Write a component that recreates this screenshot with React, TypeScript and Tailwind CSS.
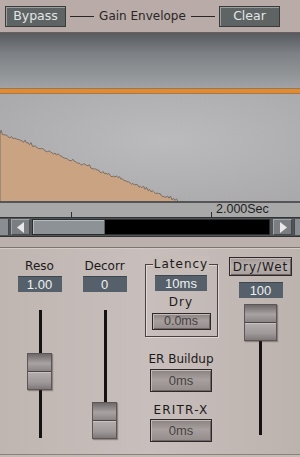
import React from "react";

const font = "font-['DejaVu_Sans',sans-serif]";
const helv = "font-['Liberation_Sans',Arial,sans-serif]";

function wavePoints(): string {
  const pts: string[] = ["0,170", "0,101"];
  for (let x = 1; x <= 178; x += 1.5) {
    const n =
      Math.sin(x * 1.7) * 1.2 +
      Math.sin(x * 0.63 + 1) * 1.3 +
      (Math.sin(x * 12.9898) * 43758.5453 % 1) * 1.8;
    let y = 101 + 0.385 * x - Math.abs(n);
    if (y > 169.5) y = 169.5;
    pts.push(`${x.toFixed(1)},${y.toFixed(1)}`);
  }
  pts.push("192,169.5", "192,170");
  return pts.join(" ");
}

function Graph() {
  return (
    <div className="h-[170px] w-full border-b-2 border-[#555457]">
      <svg width="300" height="168" viewBox="0 0 300 168" className="block">
        <defs>
          <linearGradient id="top" x1="0" y1="0" x2="0" y2="1">
            <stop offset="0" stopColor="#575b5f" />
            <stop offset="0.35" stopColor="#7c8084" />
            <stop offset="1" stopColor="#a2a4a6" />
          </linearGradient>
          <radialGradient id="bot" cx="0.55" cy="0.45" r="0.7">
            <stop offset="0" stopColor="#bbbbbd" />
            <stop offset="1" stopColor="#a9a9ab" />
          </radialGradient>
        </defs>
        <rect x="0" y="0" width="300" height="57" fill="url(#top)" />
        <rect x="0" y="57" width="300" height="111" fill="url(#bot)" />
        <rect x="0" y="55" width="300" height="1" fill="#8a7a6a" />
        <rect x="0" y="56" width="300" height="4" fill="#e48a2a" />
        <rect x="0" y="60" width="300" height="1" fill="#9a7a5a" />
        <polyline points={wavePoints()} fill="#caa482" stroke="#7a6e66" strokeWidth="1" />
      </svg>
    </div>
  );
}

function Ruler() {
  return (
    <div className="relative h-[14px] bg-[#a8a8a9]">
      <div className="absolute left-[71px] top-[9px] h-[5px] w-px bg-[#303030]" />
      <div className="absolute left-[211px] top-[9px] h-[5px] w-px bg-[#303030]" />
      <span className={`absolute left-[216px] top-[-1px] text-[12.5px] leading-[14px] text-[#1e1e1e] ${helv}`}>
        2.000Sec
      </span>
    </div>
  );
}

function ArrowBtn({ dir }: { dir: "l" | "r" }) {
  return (
    <div className="flex h-[16px] w-[19px] items-center justify-center border border-t-[#a0a4a6] border-l-[#a0a4a6] border-b-[#45494b] border-r-[#45494b] bg-[#7a7e82]">
      <svg width="8" height="11" viewBox="0 0 8 11">
        {dir === "l" ? (
          <polygon points="7,0 7,11 0,5.5" fill="#e8e8e8" />
        ) : (
          <polygon points="1,0 1,11 8,5.5" fill="#e8e8e8" />
        )}
      </svg>
    </div>
  );
}

function Scrollbar() {
  return (
    <div className="flex h-[20px] items-center bg-[#505456] border-y border-[#303234]">
      <div className="h-[16px] w-[9px] bg-[#8a8e92] border-r border-[#45494b]" />
      <div className="ml-[2px]">
        <ArrowBtn dir="l" />
      </div>
      <div className="ml-[2px] flex h-[16px] flex-1 border border-[#2a2c2e] bg-black">
        <div className="h-full w-[72px] bg-[#8c9296] border-r border-[#5a5e62] shadow-[inset_1px_1px_0_#b6bcc0]" />
      </div>
      <div className="ml-[3px]">
        <ArrowBtn dir="r" />
      </div>
      <div className="ml-[2px] h-[16px] w-[6px] bg-[#8a8e92] border-l border-[#45494b]" />
    </div>
  );
}

function ValueBox({ w, children }: { w: string; children: React.ReactNode }) {
  return (
    <div
      className={`flex h-[16px] ${w} items-center justify-center bg-[#56606a] text-[13px] text-[#eef0f0] ${helv} border-t border-[#3e464e]`}
    >
      {children}
    </div>
  );
}

function BevelBtn({ w, h, children, cls = "" }: { w: string; h: string; children: React.ReactNode; cls?: string }) {
  return (
    <div
      className={`flex ${w} ${h} items-center justify-center border border-[#2e2828] bg-[linear-gradient(#8a8282,#a8a09e_45%,#948c8a)] shadow-[inset_1px_1px_0_#c2bab8,inset_-1px_-1px_0_#6e6666] ${cls}`}
    >
      {children}
    </div>
  );
}

function Thumb({ w, h }: { w: string; h: string }) {
  return (
    <div
      className={`flex ${w} ${h} flex-col border border-[#5c5656] shadow-[1px_1px_1px_rgba(60,50,50,0.4)]`}
    >
      <div className="flex-1 bg-[linear-gradient(#6e6868,#a8a2a2_55%,#8a8484)]" />
      <div className="h-px bg-[#4a4444]" />
      <div className="h-px bg-[#c8c2c2]" />
      <div className="flex-1 bg-[linear-gradient(#b2acac,#9e9898_60%,#7e7878)]" />
    </div>
  );
}

function SliderCol({
  label,
  value,
  boxW,
  thumbTop,
}: {
  label: string;
  value: string;
  boxW: string;
  thumbTop: string;
}) {
  return (
    <div className="flex flex-col items-center">
      <div className={`h-[16px] text-[12px] leading-[16px] text-[#1c1a1a] ${font}`}>{label}</div>
      <div className="mt-[2px]">
        <ValueBox w={boxW}>{value}</ValueBox>
      </div>
      <div className="relative mt-[18px] h-[128px] w-[26px]">
        <div className="absolute left-[12px] top-0 bottom-0 w-[3px] bg-[#141212]" />
        <div className={`absolute left-0 ${thumbTop}`}>
          <Thumb w="w-[25px]" h="h-[37px]" />
        </div>
      </div>
    </div>
  );
}

export default function App() {
  return (
    <div className={`h-[457px] w-[300px] overflow-hidden bg-[#c4bab6] ${font}`}>
      {/* top bar */}
      <div className="flex h-[33px] items-center border-b border-[#6a6060] bg-[#b9aba7] px-[5px]">
        <div className="flex h-[21px] w-[61px] items-center justify-center border border-[#3a3a3a] bg-[#5e6464] text-[12.5px] text-[#e2e6e6] shadow-[inset_1px_1px_0_#9aa0a0]">
          Bypass
        </div>
        <div className="flex flex-1 items-center justify-center gap-[5px] text-[12px] text-[#2a2626]">
          <div className="h-px w-[24px] bg-[#2a2626]" />
          <span>Gain Envelope</span>
          <div className="h-px w-[24px] bg-[#2a2626]" />
        </div>
        <div className="mr-[15px] flex h-[21px] w-[61px] items-center justify-center border border-[#3a3a3a] bg-[#5e6464] text-[12.5px] text-[#e2e6e6] shadow-[inset_1px_1px_0_#9aa0a0]">
          Clear
        </div>
      </div>

      <Graph />
      <Ruler />
      <Scrollbar />

      <div className="h-[11px] border-b border-[#7e7472] bg-[#bcb0ad]" />
      <div className="h-px bg-[#d4cac6]" />

      {/* lower panel */}
      <div className="flex h-[206px] bg-[linear-gradient(90deg,#bfb5b1,#c8bebb_50%,#bcb2ae)] border-b border-[#8a807e]">
        <div className="ml-[17px] mt-[9px] w-[45px]">
          <SliderCol label="Reso" value="1.00" boxW="w-[44px]" thumbTop="top-[43px]" />
        </div>
        <div className="ml-[20px] mt-[9px] w-[45px]">
          <SliderCol label="Decorr" value="0" boxW="w-[44px]" thumbTop="top-[92px]" />
        </div>

        <div className="ml-[20px] flex w-[68px] flex-col items-center">
          <div className="relative mt-[15px] flex h-[73px] w-[73px] flex-col items-center border border-[#4a4242] shadow-[inset_1px_1px_0_#e0d8d4,1px_1px_0_#e0d8d4]">
            <div className="absolute top-[-9px] bg-[#c6bcb8] px-[1px] text-[12px] leading-[16px] tracking-[1px] text-[#1c1a1a]">
              Latency
            </div>
            <div className="mt-[10px]">
              <ValueBox w="w-[52px]">10ms</ValueBox>
            </div>
            <div className="mt-[2px] text-[12px] leading-[18px] tracking-[1px] text-[#1c1a1a]">Dry</div>
            <BevelBtn w="w-[59px]" h="h-[17px]" cls="mt-[2px]">
              <span className={`text-[12.5px] text-[#464242] ${helv}`}>0.0ms</span>
            </BevelBtn>
          </div>
          <div className="mt-[14px] text-[12px] leading-[16px] text-[#1c1a1a]">ER Buildup</div>
          <BevelBtn w="w-[62px]" h="h-[23px]" cls="mt-[2px]">
            <span className={`text-[13px] text-[#464242] ${helv}`}>0ms</span>
          </BevelBtn>
          <div className="mt-[10px] text-[12px] leading-[16px] tracking-[1.2px] text-[#1c1a1a]">ERITR-X</div>
          <BevelBtn w="w-[62px]" h="h-[23px]" cls="mt-[1px]">
            <span className={`text-[13px] text-[#464242] ${helv}`}>0ms</span>
          </BevelBtn>
        </div>

        <div className="ml-[14px] flex flex-col items-center">
          <BevelBtn w="w-[63px]" h="h-[19px]" cls="mt-[8px] bg-[linear-gradient(#a49a98,#bab2b0_50%,#a89e9c)]">
            <span className="text-[12px] tracking-[1px] text-[#1c1a1a]">Dry/Wet</span>
          </BevelBtn>
          <div className="mt-[6px]">
            <ValueBox w="w-[44px]">100</ValueBox>
          </div>
          <div className="relative mt-[6px] h-[131px] w-[34px]">
            <div className="absolute left-[15px] top-[30px] bottom-0 w-[3px] bg-[#141212]" />
            <div className="absolute left-0 top-0">
              <Thumb w="w-[33px]" h="h-[37px]" />
            </div>
          </div>
        </div>
      </div>
    </div>
  );
}
